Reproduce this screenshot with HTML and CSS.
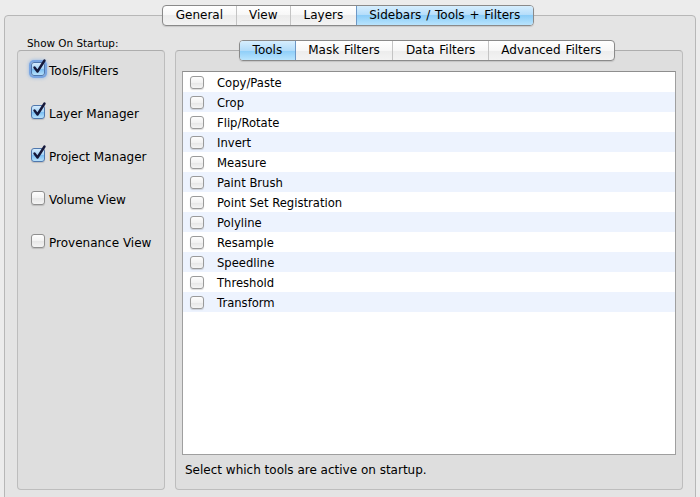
FILE: index.html
```html
<!DOCTYPE html>
<html>
<head>
<meta charset="utf-8">
<link rel="stylesheet" href="styles.css">
</head>
<body>
<div class="window">
  <div class="tabview">
    <div class="seg seg-top">
      <span class="seg-item">General</span>
      <span class="seg-item">View</span>
      <span class="seg-item">Layers</span>
      <span class="seg-item sel">Sidebars / Tools + Filters</span>
    </div>
    <div class="outer-box">
      <div class="cols">
        <div class="left-col">
          <div class="group-label">Show On Startup:</div>
          <div class="group left-group">
            <div class="cb-row"><span class="cb checked focus"><svg viewBox="0 0 16 16"><path d="M3.5 7.5 L6.5 11.5 L13.5 0.5"/></svg></span><span class="cb-text">Tools/Filters</span></div>
            <div class="cb-row"><span class="cb checked"><svg viewBox="0 0 16 16"><path d="M3.5 7.5 L6.5 11.5 L13.5 0.5"/></svg></span><span class="cb-text">Layer Manager</span></div>
            <div class="cb-row"><span class="cb checked"><svg viewBox="0 0 16 16"><path d="M3.5 7.5 L6.5 11.5 L13.5 0.5"/></svg></span><span class="cb-text">Project Manager</span></div>
            <div class="cb-row"><span class="cb"></span><span class="cb-text">Volume View</span></div>
            <div class="cb-row"><span class="cb"></span><span class="cb-text">Provenance View</span></div>
          </div>
        </div>
        <div class="right-col">
          <div class="seg seg-inner">
            <span class="seg-item sel">Tools</span>
            <span class="seg-item">Mask Filters</span>
            <span class="seg-item">Data Filters</span>
            <span class="seg-item">Advanced Filters</span>
          </div>
          <div class="group right-group">
            <div class="list">
              <div class="row"><span class="cb small"></span><span class="row-text">Copy/Paste</span></div>
              <div class="row"><span class="cb small"></span><span class="row-text">Crop</span></div>
              <div class="row"><span class="cb small"></span><span class="row-text">Flip/Rotate</span></div>
              <div class="row"><span class="cb small"></span><span class="row-text">Invert</span></div>
              <div class="row"><span class="cb small"></span><span class="row-text">Measure</span></div>
              <div class="row"><span class="cb small"></span><span class="row-text">Paint Brush</span></div>
              <div class="row"><span class="cb small"></span><span class="row-text">Point Set Registration</span></div>
              <div class="row"><span class="cb small"></span><span class="row-text">Polyline</span></div>
              <div class="row"><span class="cb small"></span><span class="row-text">Resample</span></div>
              <div class="row"><span class="cb small"></span><span class="row-text">Speedline</span></div>
              <div class="row"><span class="cb small"></span><span class="row-text">Threshold</span></div>
              <div class="row"><span class="cb small"></span><span class="row-text">Transform</span></div>
            </div>
            <div class="hint">Select which tools are active on startup.</div>
          </div>
        </div>
      </div>
    </div>
  </div>
</div>
</body>
</html>
```

FILE: styles.css
```css
* { box-sizing: border-box; }
html, body { margin: 0; padding: 0; }
body {
  background: #ececec;
  font-family: "DejaVu Sans", "Liberation Sans", sans-serif;
  font-size: 12px;
  color: #000;
  width: 700px;
  height: 497px;
  overflow: hidden;
}
.window {
  padding: 5px 4px 0 4px;
  height: 497px;
  overflow: hidden;
}
.tabview {
  display: flex;
  flex-direction: column;
  align-items: center;
}
.seg {
  display: flex;
  height: 21px;
  border: 1px solid #8a8a8a;
  border-radius: 4px;
  background: linear-gradient(#ffffff, #f7f7f7 50%, #ececec 50%, #f3f3f3);
  position: relative;
  z-index: 1;
  overflow: hidden;
  box-shadow: 0 1px 1px rgba(0,0,0,0.12);
}
.seg-top { margin-bottom: -11px; margin-right: 4px; }
.seg-inner { margin-bottom: -11px; margin-right: 4px; }
.seg-item {
  padding: 0 12.5px;
  line-height: 19px;
  font-size: 12px;
  word-spacing: 1px;
  border-left: 1px solid #c4c4c4;
  white-space: nowrap;
}
.seg-item:first-child { border-left: none; }
.seg-item.sel {
  background: linear-gradient(#d6eefe, #b2dcfa 50%, #8ccdf8 50%, #b9e4fd);
  border-left-color: #6d98c6;
}
.seg-item.sel + .seg-item { border-left-color: #6d98c6; }
.outer-box {
  align-self: stretch;
  height: 520px;
  background: #e4e4e4;
  border: 1px solid #b7b7b7;
  border-radius: 4px;
  padding: 24px 11px 0 12px;
}
.cols {
  display: grid;
  grid-template-columns: 148px 508px;
  column-gap: 10px;
}
.left-col, .right-col {
  display: flex;
  flex-direction: column;
}
.right-col { align-items: center; }
.group-label {
  margin-top: -4px;
  height: 14px;
  line-height: 14px;
  font-size: 10.4px;
  padding-left: 10px;
}
.group {
  height: 440px;
  background: #dedede;
  border: 1px solid #bdbdbd;
  border-top-color: #adadad;
  border-radius: 4px;
}
.left-group {
  display: flex;
  flex-direction: column;
  gap: 29px;
  padding: 11px 0 0 13px;
}
.right-group {
  align-self: stretch;
  display: flex;
  flex-direction: column;
  padding: 20px 6px 0 6px;
}
.cb-row {
  display: flex;
  align-items: center;
  height: 14px;
}
.cb {
  position: relative;
  flex: none;
  width: 14px;
  height: 14px;
  border: 1px solid #8f8f8f;
  border-radius: 3px;
  background: linear-gradient(#fdfdfd, #f2f2f2 50%, #e6e6e6 51%, #f4f4f4);
  box-shadow: 0 1px 1px rgba(0,0,0,0.15);
}
.cb.checked {
  border-color: #4f77ad;
  background: linear-gradient(#d5ebfd, #a4d3f7 50%, #79bdf2 51%, #b7e1fc);
}
.cb.focus {
  box-shadow: 0 0 0 2px rgba(95, 150, 225, 0.7), 0 0 3px 3px rgba(120, 170, 235, 0.45);
}
.cb svg {
  position: absolute;
  left: -1px;
  top: -3px;
  width: 16px;
  height: 16px;
  overflow: visible;
}
.cb svg path {
  fill: none;
  stroke: #15183a;
  stroke-width: 2.4;
  stroke-linecap: round;
  stroke-linejoin: round;
}
.cb-text {
  margin-left: 4px;
  padding-top: 3px;
  font-size: 12px;
  white-space: nowrap;
}
.list {
  height: 384px;
  background: #fff;
  border: 1px solid #9f9f9f;
  border-top-color: #8e8e8e;
}
.row {
  display: flex;
  align-items: center;
  height: 20px;
  padding-left: 7px;
}
.row:nth-child(even) { background: #edf3fe; }
.cb.small {
  width: 14px;
  height: 13px;
  border-color: #9a9a9a;
}
.row-text {
  margin-left: 13px;
  padding-top: 2px;
  font-size: 11.6px;
  white-space: nowrap;
}
.hint {
  margin-top: 8px;
  padding-left: 3px;
  line-height: 14px;
  font-size: 12px;
}
```
